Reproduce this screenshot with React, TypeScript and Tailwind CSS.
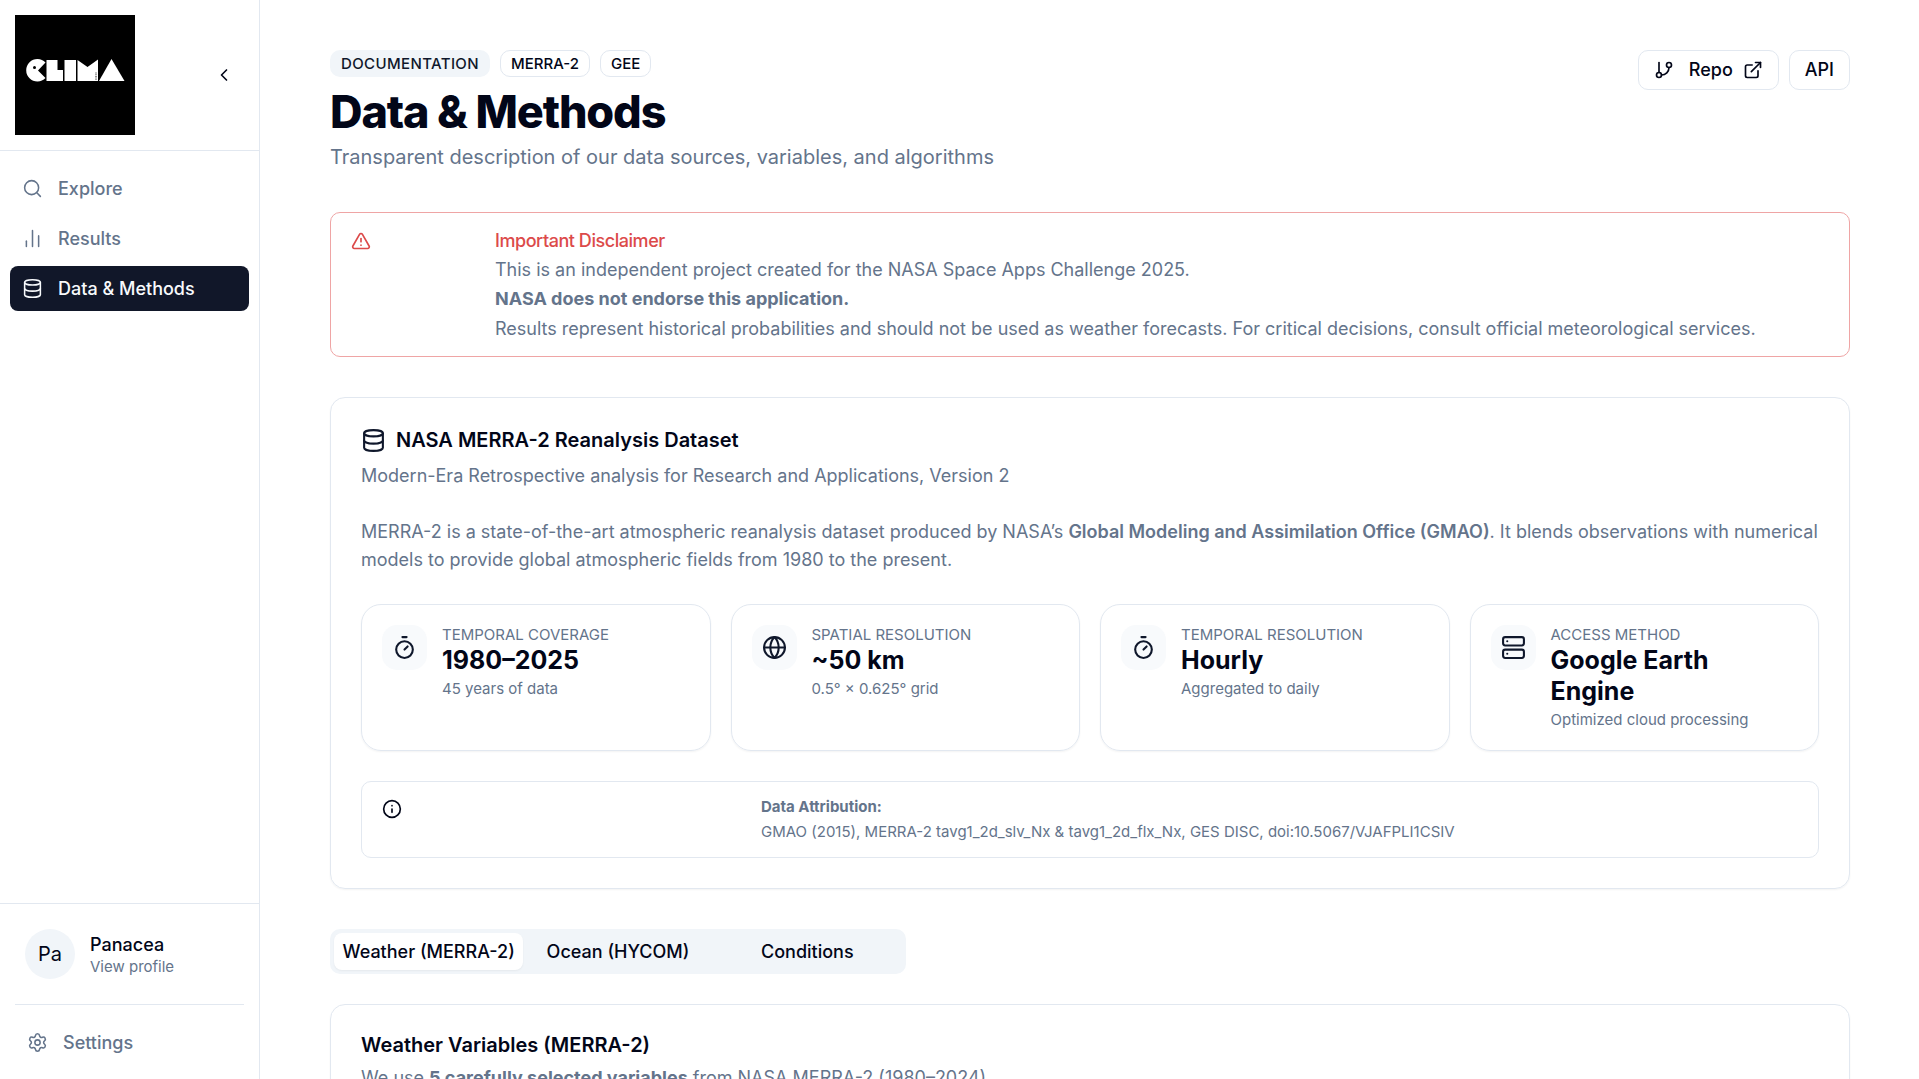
import type { ReactNode } from "react";
import {
  ChevronLeft, Search, ChartNoAxesColumn, Database, Settings, GitBranch, ExternalLink,
  TriangleAlert, Timer, Globe, Server, Info,
} from "lucide-react";

const navBase = "flex h-[45px] items-center gap-[15px] rounded-lg px-3 text-lg font-medium";

function NavItem({ icon, label, active }: { icon: ReactNode; label: string; active?: boolean }) {
  return (
    <a
      href="#"
      aria-current={active ? "page" : undefined}
      className={`${navBase} ${active ? "bg-[#111729] text-slate-50" : "text-[#64748b]"}`}
    >
      {icon}
      {label}
    </a>
  );
}

function Logo() {
  return (
    <svg role="img" aria-label="CLIMA" viewBox="0 0 120 120" className="size-[120px] bg-black">
      <g fill="#fff">
        <path d="M30.5 47.5 A11.2 11.2 0 1 0 30.5 63 L23 55.5 Z" />
        <path d="M31.500 45h11v10h5.500v11H31.500z" />
        <path d="M49.500 45h11.500v21H49.500z" />
        <path d="M62.500 45l10 7 10.500-7.500v21.500h-20.500z" />
        <path d="M96.500 44l13 22H84z" />
      </g>
      <circle cx="19.500" cy="52.500" r="1.500" />
      <path d="M81 57.500v7.500" stroke="#444" strokeWidth="1.200" strokeDasharray="1 0.700" />
    </svg>
  );
}

function Sidebar() {
  return (
    <aside className="flex w-[260px] shrink-0 flex-col border-r border-slate-200">
      <div className="flex items-center justify-between border-b border-slate-200 p-[15px]">
        <Logo />
        <button aria-label="Collapse sidebar" className="flex size-[40px] items-center justify-center">
          <ChevronLeft size={20} className="text-slate-950" />
        </button>
      </div>
      <nav className="flex flex-1 flex-col gap-[5px] px-[10px] py-[15px]">
        <NavItem icon={<Search size={21} strokeWidth={1.75} />} label="Explore" />
        <NavItem icon={<ChartNoAxesColumn size={21} strokeWidth={1.75} />} label="Results" />
        <NavItem icon={<Database size={21} strokeWidth={1.75} />} label="Data & Methods" active />
      </nav>
      <div className="border-t border-slate-200 px-[15px] pt-[15px] pb-[14px]">
        <a href="#" className="flex items-center gap-[15px] p-[10px]">
          <span className="flex size-[50px] items-center justify-center rounded-full bg-slate-100 text-xl text-slate-950">Pa</span>
          <span className="flex flex-col">
            <span className="text-lg/[25px] font-medium text-slate-950">Panacea</span>
            <span className="text-[15px]/5 text-[#64748b]">View profile</span>
          </span>
        </a>
        <hr className="my-[15px] border-slate-200" />
        <a href="#" className="flex h-[45px] items-center gap-[15px] px-3 text-lg font-medium text-[#64748b]">
          <Settings size={21} strokeWidth={1.75} />
          Settings
        </a>
      </div>
    </aside>
  );
}

function Stat({ icon, label, value, note }: { icon: ReactNode; label: string; value: string; note: string }) {
  return (
    <div className="flex items-start gap-[15px] rounded-[20px] border border-slate-200 p-5 shadow-xs">
      <div className="flex size-[45px] shrink-0 items-center justify-center rounded-[15px] bg-slate-50 text-slate-900">{icon}</div>
      <div>
        <div className="text-[15px]/5 text-[#64748b] uppercase">{label}</div>
        <div className="text-[25px]/[31px] font-bold">{value}</div>
        <div className="mt-[3px] text-[15px]/5 text-[#64748b]">{note}</div>
      </div>
    </div>
  );
}

const badge = "rounded-[10px] border px-[10px] text-[15px]/[25px] font-medium";
const button = "flex h-[40px] items-center rounded-[10px] border border-slate-200 px-[15px] text-lg font-medium";

export default function App() {
  return (
    <div className="flex h-screen overflow-hidden bg-white font-['Inter',sans-serif] text-slate-950">
      <Sidebar />
      <main className="flex min-w-0 flex-1 flex-col overflow-hidden pt-[50px] pr-[69px] pl-[70px]">
        <header className="flex items-start justify-between">
          <div>
            <div className="flex gap-[10px]">
              <span className={`${badge} border-transparent bg-slate-100 tracking-wide text-slate-900`}>DOCUMENTATION</span>
              <span className={`${badge} border-slate-200`}>MERRA-2</span>
              <span className={`${badge} border-slate-200`}>GEE</span>
            </div>
            <h1 className="mt-[10px] text-[45px]/[50px] font-extrabold tracking-tight">Data &amp; Methods</h1>
            <p className="mt-[5px] text-xl/[30px] text-[#64748b]">
              Transparent description of our data sources, variables, and algorithms
            </p>
          </div>
          <div className="flex gap-[10px]">
            <button className={button}>
              <GitBranch size={20} className="mr-[15px]" />
              Repo
              <ExternalLink size={20} className="ml-[10px]" />
            </button>
            <button className={button}>API</button>
          </div>
        </header>

        <div role="alert" className="mt-[40px] grid shrink-0 grid-cols-[129px_1fr] gap-x-[15px] rounded-[10px] border border-[#efa5a5] px-5 pt-[15px] pb-3">
          <TriangleAlert size={20} className="mt-[3px] text-[#dc4a4a]" />
          <div>
            <div className="text-lg/[25px] font-medium tracking-tight text-[#dc4a4a]">Important Disclaimer</div>
            <div className="mt-[3px] text-lg/[28px] text-[#64748b]">This is an independent project created for the NASA Space Apps Challenge 2025.</div>
            <div className="text-lg/[30px] font-bold text-[#64748b]">NASA does not endorse this application.</div>
            <div className="text-lg/[30px] text-[#64748b]">
              Results represent historical probabilities and should not be used as weather forecasts. For critical decisions, consult official meteorological services.
            </div>
          </div>
        </div>

        <section className="mt-[40px] shrink-0 rounded-[15px] border border-slate-200 p-[30px] shadow-xs">
          <h2 className="flex items-center gap-[10px] text-xl/[25px] font-semibold">
            <Database size={25} className="text-slate-900" />
            NASA MERRA-2 Reanalysis Dataset
          </h2>
          <p className="mt-[10px] text-lg/[25px] text-[#64748b]">Modern-Era Retrospective analysis for Research and Applications, Version 2</p>
          <p className="mt-[30px] text-lg/[28px] text-[#64748b]">
            MERRA-2 is a state-of-the-art atmospheric reanalysis dataset produced by NASA’s{" "}
            <strong className="font-semibold">Global Modeling and Assimilation Office (GMAO)</strong>. It blends observations with numerical models to provide global atmospheric fields from 1980 to the present.
          </p>
          <div className="mt-[30px] grid grid-cols-4 gap-5">
            <Stat icon={<Timer size={25} />} label="Temporal Coverage" value="1980–2025" note="45 years of data" />
            <Stat icon={<Globe size={25} />} label="Spatial Resolution" value="~50 km" note="0.5° × 0.625° grid" />
            <Stat icon={<Timer size={25} />} label="Temporal Resolution" value="Hourly" note="Aggregated to daily" />
            <Stat icon={<Server size={25} />} label="Access Method" value="Google Earth Engine" note="Optimized cloud processing" />
          </div>
          <div className="mt-[30px] grid grid-cols-[364px_1fr] gap-x-[15px] rounded-[10px] border border-slate-200 px-5 pt-3 pb-[13px]">
            <Info size={20} className="mt-[5px]" />
            <div className="text-[15px]/[25px] text-[#64748b]">
              <strong className="block font-bold">Data Attribution:</strong>
              GMAO (2015), MERRA-2 tavg1_2d_slv_Nx &amp; tavg1_2d_flx_Nx, GES DISC, doi:10.5067/VJAFPLI1CSIV
            </div>
          </div>
        </section>

        <div role="tablist" className="mt-[40px] grid h-[45px] w-[576px] shrink-0 grid-cols-3 rounded-[10px] bg-slate-100 p-1 text-lg font-medium">
          <button role="tab" aria-selected="true" className="rounded-lg bg-white whitespace-nowrap shadow-xs">Weather (MERRA-2)</button>
          <button role="tab" aria-selected="false">Ocean (HYCOM)</button>
          <button role="tab" aria-selected="false">Conditions</button>
        </div>

        <section className="mt-[30px] shrink-0 rounded-[15px] border border-slate-200 p-[30px] shadow-xs">
          <h2 className="text-xl/5 font-semibold">Weather Variables (MERRA-2)</h2>
          <p className="mt-[10px] text-lg/[25px] text-[#64748b]">
            We use <strong className="font-bold">5 carefully selected variables</strong> from NASA MERRA-2 (1980–2024)
          </p>
        </section>
      </main>
    </div>
  );
}
